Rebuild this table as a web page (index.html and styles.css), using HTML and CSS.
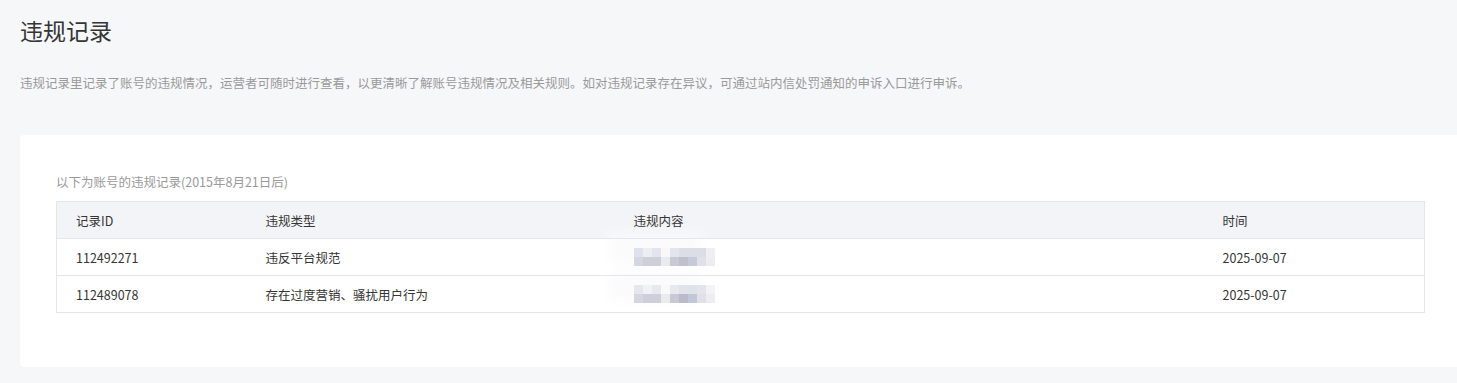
FILE: index.html
```html
<!DOCTYPE html>
<html lang="zh-CN">
<head>
<meta charset="utf-8">
<title>违规记录</title>
<link rel="stylesheet" href="styles.css">
</head>
<body>
<div class="page">
  <h1 class="title">违规记录</h1>
  <p class="desc">违规记录里记录了账号的违规情况，运营者可随时进行查看，以更清晰了解账号违规情况及相关规则。如对违规记录存在异议，可通过站内信处罚通知的申诉入口进行申诉。</p>
  <div class="card">
    <p class="sub">以下为账号的违规记录(2015年8月21日后)</p>
    <table class="tbl">
      <colgroup>
        <col class="c1"><col class="c2"><col class="c3"><col class="c4">
      </colgroup>
      <thead>
        <tr><th class="p1">记录ID</th><th>违规类型</th><th class="p3">违规内容</th><th class="p4">时间</th></tr>
      </thead>
      <tbody>
        <tr>
          <td class="p1">112492271</td>
          <td>违反平台规范</td>
          <td class="p3"><div class="blur">
            <i style="background:#e0e1ea"></i><i style="background:#eceef3"></i><i style="background:#e3e5ec"></i><i style="background:#f8f8fa"></i><i style="background:#e4e5ec"></i><i style="background:#dcdde6"></i><i style="background:#dcdde6"></i><i style="background:#dcdde6"></i><i style="background:#f0f0f3"></i>
            <i style="background:#d6d6e0"></i><i style="background:#cfcfdc"></i><i style="background:#cfcfdc"></i><i style="background:#ebebef"></i><i style="background:#c9c9d6"></i><i style="background:#c0c0cc"></i><i style="background:#c6cad9"></i><i style="background:#e0e0e8"></i><i style="background:#ececf1"></i>
          </div></td>
          <td class="p4">2025-09-07</td>
        </tr>
        <tr>
          <td class="p1">112489078</td>
          <td>存在过度营销、骚扰用户行为</td>
          <td class="p3"><div class="blur">
            <i style="background:#e6e7ee"></i><i style="background:#f1f2f5"></i><i style="background:#e8e9ef"></i><i style="background:#f9f9fb"></i><i style="background:#e8e9ef"></i><i style="background:#e2e3ea"></i><i style="background:#e0e2ea"></i><i style="background:#e4e5ec"></i><i style="background:#f3f3f6"></i>
            <i style="background:#d6d6e0"></i><i style="background:#cfcfdc"></i><i style="background:#cfcfdc"></i><i style="background:#ebebef"></i><i style="background:#c9c9d6"></i><i style="background:#babbca"></i><i style="background:#c2c7d8"></i><i style="background:#e0e0e8"></i><i style="background:#ececf1"></i>
          </div></td>
          <td class="p4">2025-09-07</td>
        </tr>
      </tbody>
    </table>
  </div>
</div>
</body>
</html>
```

FILE: styles.css
```css
html, body {
  margin: 0;
  padding: 0;
  overflow: hidden;
}
body {
  background: #f6f7f9;
  font-family: "Microsoft YaHei", "Noto Sans CJK SC", "Noto Sans", sans-serif;
  color: #353535;
}
.page {
  padding: 14px 0 0 20px;
}
.title {
  margin: 0;
  font-size: 23px;
  font-weight: normal;
  line-height: 32px;
  color: #353535;
}
.desc {
  margin: 28px 0 0;
  font-size: 12.5px;
  line-height: 18px;
  color: #9a9a9a;
}
.card {
  margin-top: 43px;
  width: 1460px;
  height: 232px;
  background: #fff;
  border-radius: 4px;
  padding: 38px 0 0 36px;
  box-sizing: border-box;
}
.sub {
  margin: 0 0 10px;
  font-size: 12.5px;
  line-height: 18px;
  color: #9a9a9a;
}
.tbl {
  width: 1368px;
  border-collapse: collapse;
  table-layout: fixed;
  font-size: 12.5px;
  color: #353535;
}
.c1 { width: 176px; }
.c2 { width: 383px; }
.c3 { width: 588px; }
.c4 { width: 221px; }
.tbl th, .tbl td {
  height: 36px;
  padding: 0 0 0 33px;
  text-align: left;
  font-weight: normal;
  border-top: 1px solid #e5e6eb;
  border-bottom: 1px solid #e5e6eb;
  vertical-align: middle;
}
.tbl tr > :first-child { border-left: 1px solid #e5e6eb; }
.tbl tr > :last-child { border-right: 1px solid #e5e6eb; }
.tbl .p1 { padding-left: 19px; }
.tbl .p3 { padding-left: 18px; }
.tbl .p4 { padding-left: 19px; }
.tbl thead th {
  background: #f3f4f7;
}
.blur {
  display: grid;
  grid-template-columns: repeat(9, 9px);
  grid-auto-rows: 9px;
  width: 81px;
  box-shadow: -20px -8px 14px 6px #fbfbfc;
}
.blur i {
  display: block;
}
```
